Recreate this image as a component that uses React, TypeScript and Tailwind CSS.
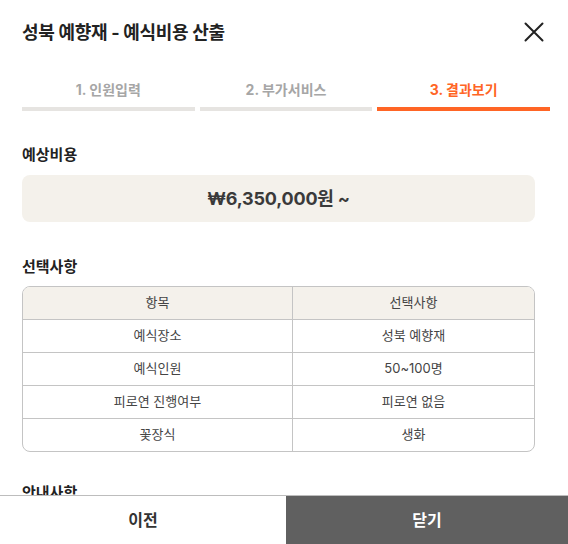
interface Row {
  label: string;
  value: string;
}

const rows: Row[] = [
  { label: "예식장소", value: "성북 예향재" },
  { label: "예식인원", value: "50~100명" },
  { label: "피로연 진행여부", value: "피로연 없음" },
  { label: "꽃장식", value: "생화" },
];

const steps = [
  { label: "1. 인원입력", active: false },
  { label: "2. 부가서비스", active: false },
  { label: "3. 결과보기", active: true },
];

const App = () => {
  return (
    <div
      className="w-[568px] h-[544px] flex flex-col bg-white overflow-hidden text-[#222]"
      style={{ fontFamily: 'Inter, "Noto Sans CJK KR", sans-serif' }}
    >
      {/* header */}
      <div className="flex items-center justify-between pl-[22px] pr-[24px] h-[64px] shrink-0">
        <h1 className="text-[18px] font-bold tracking-[-0.3px] text-[#222]">성북 예향재 - 예식비용 산출</h1>
        <svg width="20" height="20" viewBox="0 0 20 20" className="text-[#222]">
          <path d="M1.5 1.5 L18.5 18.5 M18.5 1.5 L1.5 18.5" stroke="currentColor" strokeWidth="2" strokeLinecap="round" fill="none" />
        </svg>
      </div>

      {/* step tabs */}
      <div className="flex gap-[5px] pl-[22px] pr-[18px] pt-[16px] shrink-0">
        {steps.map((s) => (
          <div key={s.label} className="flex-1 flex flex-col items-center">
            <span
              className={
                s.active
                  ? "text-[14px] font-bold text-[#ff6525] leading-[20px]"
                  : "text-[14px] font-bold text-[#a6a6a6] leading-[20px]"
              }
            >
              {s.label}
            </span>
            <div
              className={
                s.active
                  ? "mt-[7px] h-[4px] w-full bg-[#ff6525]"
                  : "mt-[7px] h-[4px] w-full bg-[#e6e4e1]"
              }
            />
          </div>
        ))}
      </div>

      {/* scroll content */}
      <div className="flex-1 overflow-hidden pl-[22px] pr-[33px] pt-[33px]">
        <h2 className="text-[15px] font-bold leading-[22px]">예상비용</h2>
        <div className="mt-[9px] h-[47px] rounded-[8px] bg-[#f4f1eb] flex items-center justify-center">
          <span className="text-[18px] font-bold text-[#3a3a3a] tracking-[-0.2px]">₩6,350,000원 ~</span>
        </div>

        <h2 className="mt-[34px] text-[15px] font-bold leading-[22px]">선택사항</h2>
        <div className="mt-[8px] rounded-[8px] border border-[#c4c4c4] overflow-hidden">
          <div className="grid grid-cols-[270px_1fr] bg-[#f4f1eb] h-[32px] text-[13px] text-[#444]">
            <div className="flex items-center justify-center border-r border-[#c4c4c4]">항목</div>
            <div className="flex items-center justify-center">선택사항</div>
          </div>
          {rows.map((r) => (
            <div
              key={r.label}
              className="grid grid-cols-[270px_1fr] h-[33px] border-t border-[#c4c4c4] text-[13px] text-[#444]"
            >
              <div className="flex items-center justify-center border-r border-[#c4c4c4]">{r.label}</div>
              <div className="flex items-center justify-center">{r.value}</div>
            </div>
          ))}
        </div>

        <h2 className="mt-[30px] text-[15px] font-bold leading-[22px]">안내사항</h2>
      </div>

      {/* footer */}
      <div className="flex h-[49px] shrink-0 border-t border-[#bdbdbd]">
        <button className="w-[286px] flex items-center justify-center text-[16px] font-bold text-[#333] bg-white">
          이전
        </button>
        <button className="flex-1 flex items-center justify-center text-[16px] font-bold text-white bg-[#606060]">
          닫기
        </button>
      </div>
    </div>
  );
};

export default App;
